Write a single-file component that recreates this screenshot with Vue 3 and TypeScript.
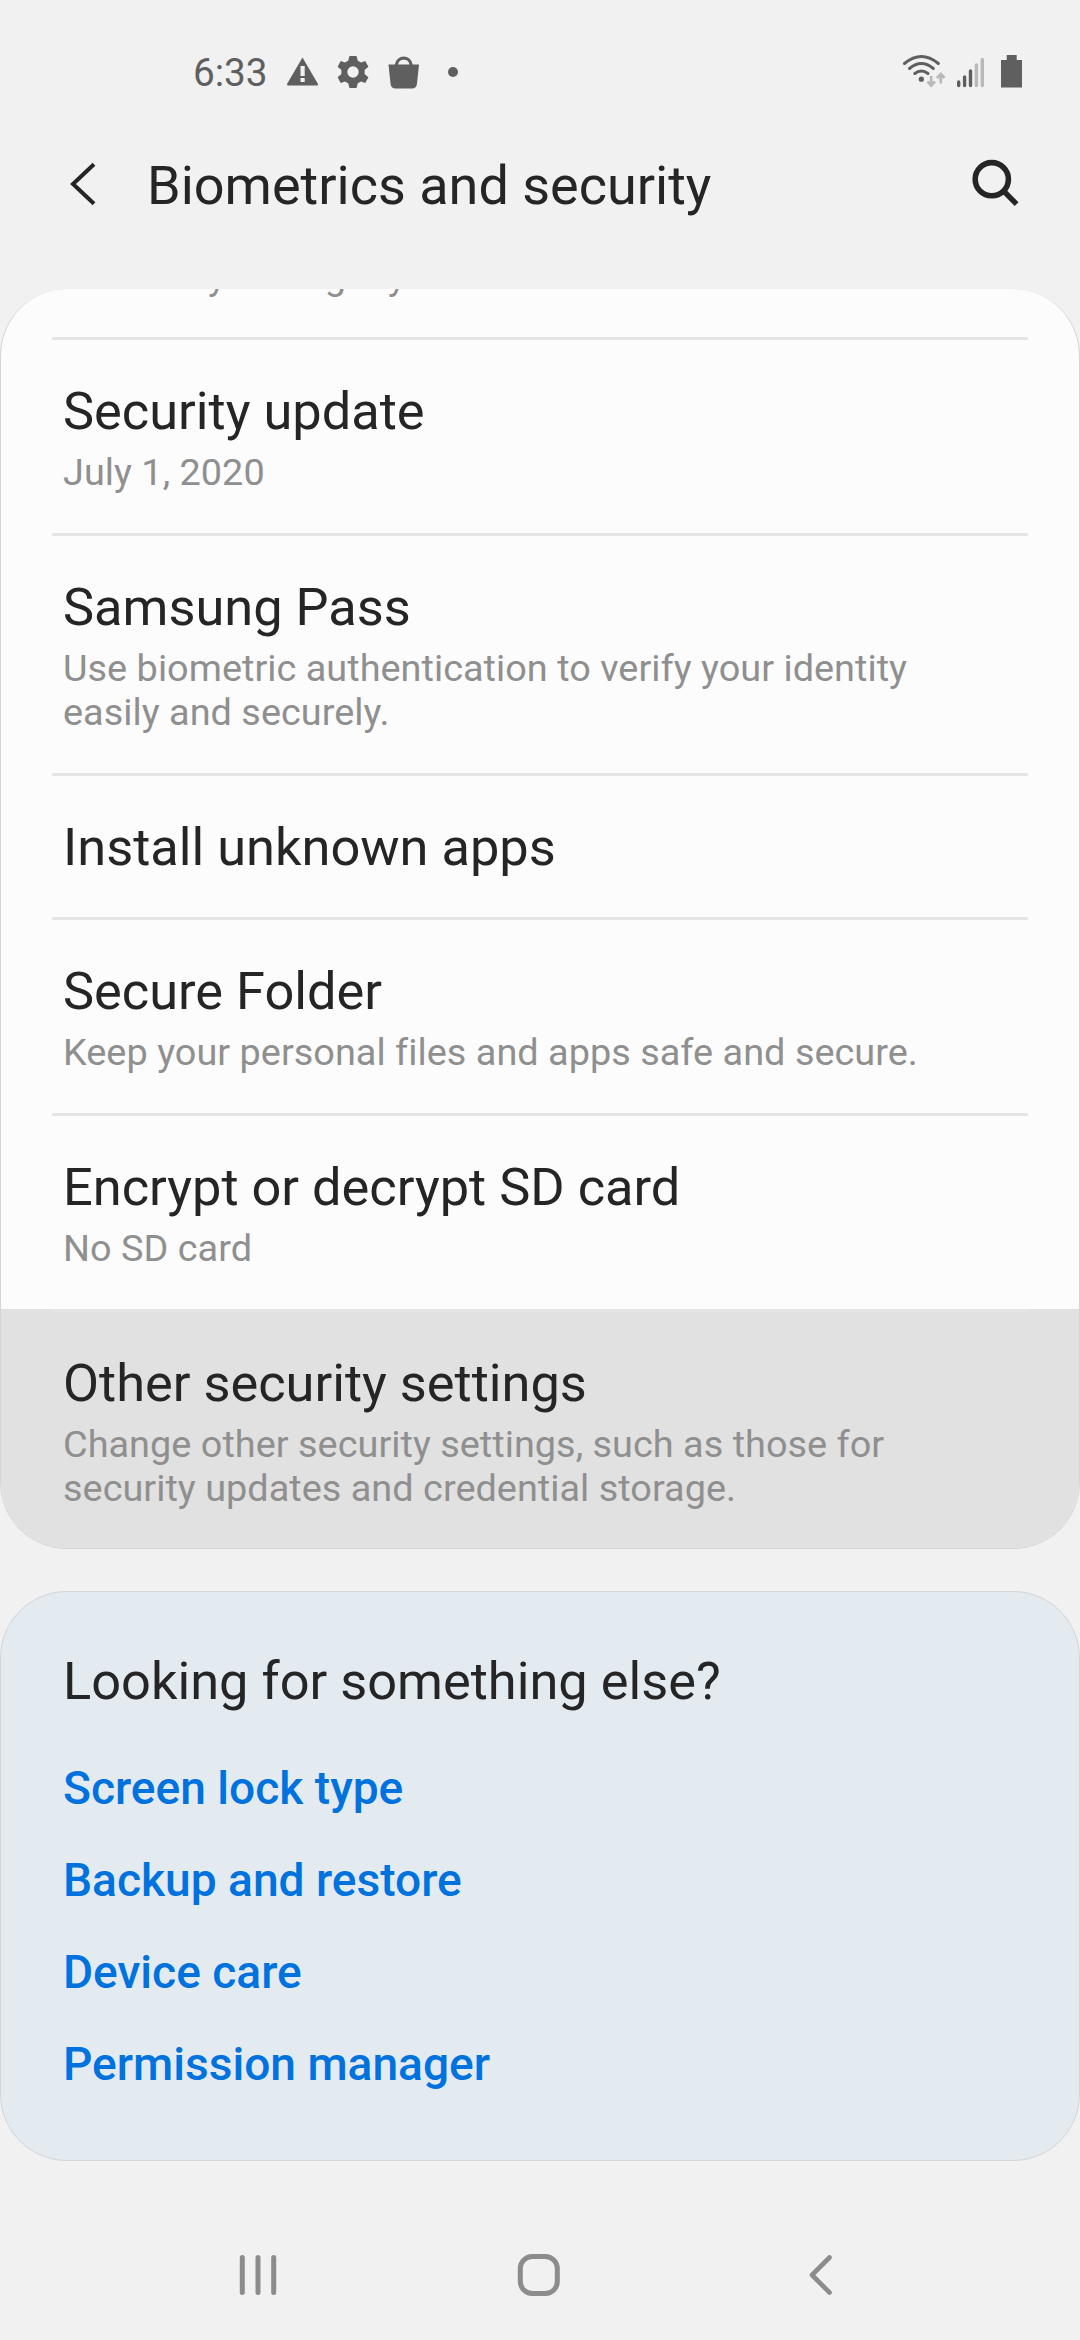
<script setup lang="ts">
interface Setting {
  title: string
  summary?: string[]
  pressed?: boolean
}

const settings: Setting[] = [
  { title: 'Security update', summary: ['July 1, 2020'] },
  {
    title: 'Samsung Pass',
    summary: ['Use biometric authentication to verify your identity', 'easily and securely.'],
  },
  { title: 'Install unknown apps' },
  { title: 'Secure Folder', summary: ['Keep your personal files and apps safe and secure.'] },
  { title: 'Encrypt or decrypt SD card', summary: ['No SD card'] },
  {
    title: 'Other security settings',
    summary: [
      'Change other security settings, such as those for',
      'security updates and credential storage.',
    ],
    pressed: true,
  },
]

const links: string[] = ['Screen lock type', 'Backup and restore', 'Device care', 'Permission manager']
</script>

<template>
  <div class="screen">
    <header class="status">
      <span class="time">6:33</span>
      <svg class="notices" width="180" height="40" viewBox="0 0 180 40">
        <path d="M16.5 7.5 31.7 33.5 Q32.5 35.5 30.5 35.5H2.5Q0.5 35.5 1.3 33.5L16.5 7.5Z" fill="#5f5f5f" />
        <path d="M14.5 16h4.2v10h-4.2zM14.5 28h4.2v4h-4.2z" fill="#f1f1f1" />
        <g transform="translate(67 22)" fill="#5f5f5f">
          <path
            fill-rule="evenodd"
            d="M-3.5-16H3.5L4.8-11.2L8-9.4L12.3-10.9L15.4-5.2L11.6-2V2L15.4 5.2L12.3 10.9L8 9.4L4.8 11.2L3.5 16H-3.5L-4.8 11.2L-8 9.4L-12.3 10.9L-15.4 5.2L-11.6 2V-2L-15.4-5.2L-12.3-10.9L-8-9.4L-4.8-11.2ZM0-5.7A5.7 5.7 0 1 0 0 5.7A5.7 5.7 0 1 0 0-5.7Z"
          />
        </g>
        <path d="M102.5 14.5H133L131 33.5Q130.5 38.5 126 38.5H109.5Q105 38.5 104.5 33.5Z" fill="#5f5f5f" />
        <path d="M110.5 16V14.5A7.3 7.3 0 0 1 125 14.5V16" fill="none" stroke="#5f5f5f" stroke-width="3.2" />
        <circle cx="167" cy="22" r="5" fill="#5f5f5f" />
      </svg>
      <svg class="radio" width="126" height="40" viewBox="0 0 126 40" fill="none">
        <g stroke="#5f5f5f" stroke-width="3" stroke-linecap="round">
          <path d="M2.5 13.5Q19.4-.5 36.3 13.5" />
          <path d="M7.5 18.5Q19.4 8.5 31.3 18.5" />
          <path d="M12.8 23.5Q19.4 18.5 26 23.5" />
        </g>
        <circle cx="19.3" cy="29.2" r="2.6" fill="#5f5f5f" />
        <path
          d="M29.2 26V34M25.5 31.5 29.2 35.5 33 31.5M38.8 33.5V25.5M35 28 38.8 24 42.5 28"
          stroke="#b8b8b8"
          stroke-width="2.6"
        />
        <g stroke-width="3.4" stroke-linecap="round">
          <path d="M56.7 32V35.5M62.6 27V35.5M68.5 21V35.5" stroke="#5f5f5f" />
          <path d="M74.4 15V35.5M80.3 9.5V35.5" stroke="#b8b8b8" />
        </g>
        <path d="M104.7 5H114.7V10H120V37.5H99V10H104.7Z" fill="#5f5f5f" />
      </svg>
    </header>

    <nav class="toolbar">
      <svg class="back" width="26" height="44" viewBox="0 0 26 44" fill="none">
        <path d="M24 2.2 3 22 24 41.8" stroke="#252525" stroke-width="4" />
      </svg>
      <h1>Biometrics and security</h1>
      <svg class="search" width="48" height="48" viewBox="0 0 48 48" fill="none" stroke="#252525">
        <circle cx="19.8" cy="20.2" r="16.6" stroke-width="5.6" />
        <path d="M31.5 31.8 44.6 45.2" stroke-width="5.4" />
      </svg>
    </nav>

    <main>
      <section class="card list">
        <div class="cutoff">
          <p class="summary">locate if you forget your unlock method.</p>
        </div>
        <article v-for="item in settings" :key="item.title" class="row" :class="{ pressed: item.pressed }">
          <h2>{{ item.title }}</h2>
          <p v-for="line in item.summary" :key="line" class="summary">{{ line }}</p>
        </article>
      </section>

      <section class="card more">
        <h2>Looking for something else?</h2>
        <a v-for="link in links" :key="link">{{ link }}</a>
      </section>
    </main>

    <footer class="navbar">
      <svg width="40" height="44" viewBox="0 0 40 44" stroke="#8c8c8c" stroke-width="5" stroke-linecap="round">
        <path d="M4.3 4.5V39.5M20 4.5V39.5M35.7 4.5V39.5" />
      </svg>
      <svg class="home" width="44" height="44" viewBox="0 0 44 44" fill="none" stroke="#8c8c8c" stroke-width="5">
        <rect x="3.3" y="3.5" width="37" height="37" rx="12" />
      </svg>
      <svg class="previous" width="26" height="44" viewBox="0 0 26 44" fill="none" stroke="#8c8c8c" stroke-width="4.6" stroke-linecap="round" stroke-linejoin="round">
        <path d="M21.5 4.5 4 22 21.5 39.5" />
      </svg>
    </footer>
  </div>
</template>

<style>
body {
  background: #f1f1f1;
}
</style>

<style scoped>
.screen {
  width: 1080px;
  height: 2340px;
  display: flex;
  flex-direction: column;
  overflow: hidden;
  background: #f1f1f1;
  color: #252525;
  font-family: Roboto, "Noto Sans", sans-serif;
}

h1,
h2,
p {
  margin: 0;
  font-weight: 400;
  white-space: nowrap;
}

.status {
  height: 100px;
  box-sizing: border-box;
  padding: 50px 52px 0 193px;
  display: flex;
  align-items: flex-start;
}

.time {
  width: 93px;
  font-size: 38.7px;
  line-height: 46px;
  color: #5f5f5f;
}

.notices,
.radio {
  flex: none;
}

.radio {
  margin-left: auto;
}

.toolbar {
  height: 189px;
  box-sizing: border-box;
  padding: 55px 60px 0 70px;
  display: flex;
  align-items: flex-start;
}

.toolbar .back {
  margin: 7px 51px 0 0;
}

.toolbar h1 {
  font-size: 54px;
  line-height: 62px;
}

.toolbar .search {
  margin: 4px 0 0 auto;
}

.card {
  box-sizing: border-box;
  border: 1px solid #d5d5d5;
  border-radius: 67px;
  overflow: hidden;
}

.list {
  height: 1260px;
  border-top: 0;
  background: #fcfcfc;
}

.cutoff {
  height: 48px;
  padding: 0 62px 39px;
  display: flex;
  align-items: flex-end;
  box-sizing: border-box;
}

.row {
  position: relative;
  box-sizing: border-box;
  padding: 44px 62px 39px;
}

.row::before {
  content: '';
  position: absolute;
  top: 0;
  left: 51px;
  right: 51px;
  height: 3px;
  background: #e5e5e5;
}

.row.pressed {
  background: #e1e1e1;
}

h2 {
  font-size: 52.35px;
  line-height: 61px;
}

.summary {
  font-size: 37.85px;
  line-height: 44px;
  letter-spacing: 0.03px;
  color: #8f8f8f;
}

.row h2 + .summary {
  margin-top: 8px;
}

.more {
  height: 570px;
  margin-top: 42px;
  padding: 59px 62px 0;
  display: flex;
  flex-direction: column;
  background: #e3eaf0;
}

.more h2 {
  margin-bottom: 30px;
}

.more a {
  font-size: 46.1px;
  font-weight: 500;
  line-height: 92px;
  color: #0072de;
  white-space: nowrap;
}

.navbar {
  margin-top: auto;
  height: 87px;
  padding-left: 238px;
  display: flex;
  align-items: flex-start;
}

.home {
  margin-left: 239px;
}

.previous {
  margin-left: 247px;
}
</style>
